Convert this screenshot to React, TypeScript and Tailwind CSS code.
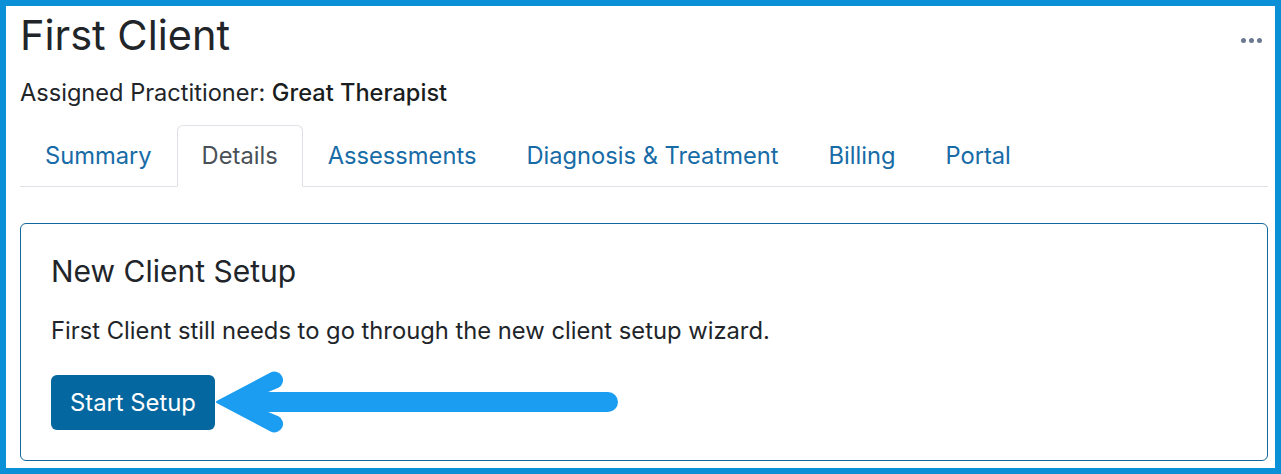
import React from "react";

const tabs = ["Summary", "Details", "Assessments", "Diagnosis & Treatment", "Billing", "Portal"];

export default function App() {
  return (
    <div
      className="relative w-[1281px] h-[474px] border-[6px] border-[#0a90d6] bg-white box-border overflow-hidden"
      style={{ fontFamily: "Inter, 'Noto Sans', sans-serif" }}
    >
      <div className="pl-[14px] pr-[7px] pt-[4px]">
        <div className="flex items-start justify-between">
          <h1 className="text-[41.5px] leading-[50px] font-normal text-[#212529]">First Client</h1>
          <div className="flex items-center gap-[3px] mt-[28px] mr-[6px]">
            <span className="w-[5px] h-[5px] rounded-full bg-[#6b7a90]" />
            <span className="w-[5px] h-[5px] rounded-full bg-[#6b7a90]" />
            <span className="w-[5px] h-[5px] rounded-full bg-[#6b7a90]" />
          </div>
        </div>
        <div className="mt-[15px] text-[23.6px] leading-[36px] text-[#212529]">
          Assigned Practitioner: <span className="font-medium text-[#1a1d20]">Great Therapist</span>
        </div>
        <div className="mt-[14px] flex border-b border-[#dee2e6]">
          {tabs.map((t) => {
            const active = t === "Details";
            return (
              <div
                key={t}
                className={
                  active
                    ? "-mb-px px-[24px] py-[12px] border border-[#dee2e6] border-b-white rounded-t-[6px] bg-white text-[23.7px] leading-[36px] text-[#495057]"
                    : "-mb-px px-[24px] py-[12px] border border-transparent text-[23.7px] leading-[36px] text-[#176ba6]"
                }
              >
                {t}
              </div>
            );
          })}
        </div>
        <div className="mt-[36px] border border-[#0f68a0] rounded-[6px] px-[30px] pt-[29px] pb-[30px]">
          <h2 className="text-[30px] leading-[36px] font-normal text-[#212529]">New Client Setup</h2>
          <p className="mt-[24px] text-[23.75px] leading-[36px] text-[#212529]">
            First Client still needs to go through the new client setup wizard.
          </p>
          <button className="mt-[26px] h-[55px] px-[19px] rounded-[6px] bg-[#05679f] text-white text-[23.8px] leading-[36px]">
            Start Setup
          </button>
        </div>
      </div>
      <svg
        className="absolute left-[-6px] top-[-6px] pointer-events-none"
        width="1281"
        height="474"
        viewBox="0 0 1281 474"
      >
        <path
          d="M 217 402 L 271 373.5 A 7.5 7.5 0 0 1 278 386.8 L 263 393 L 608 393 A 9 9 0 0 1 608 411 L 263 411 L 278 417.2 A 7.5 7.5 0 0 1 271 430.5 Z"
          fill="#1b9df1"
          stroke="#1b9df1"
          strokeWidth="2"
          strokeLinejoin="round"
        />
      </svg>
    </div>
  );
}
